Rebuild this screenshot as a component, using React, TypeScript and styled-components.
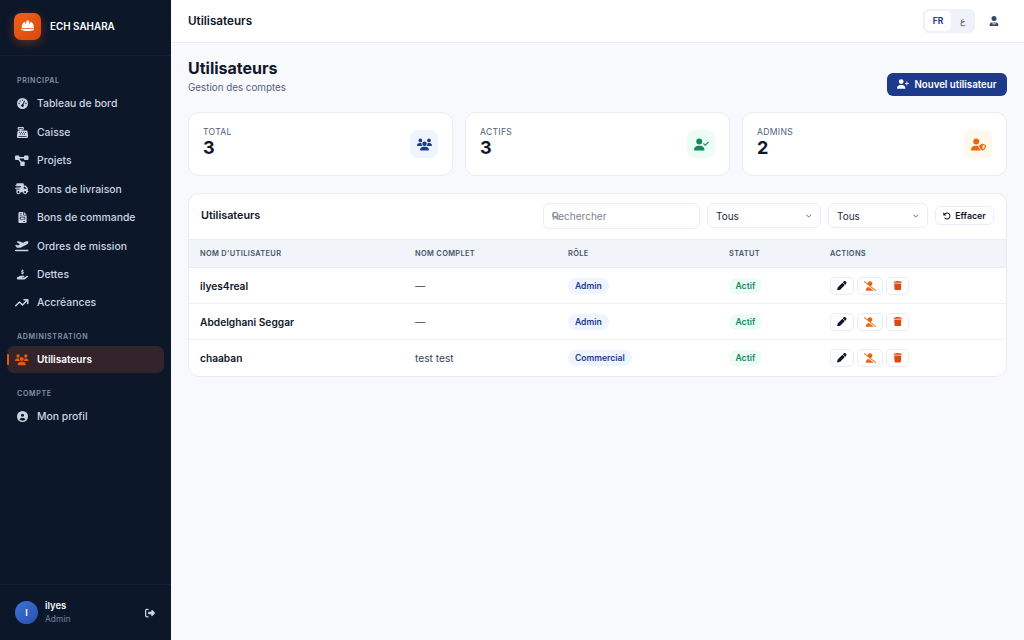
import React from "react";
import styled, { createGlobalStyle } from "styled-components";
import {
  FaArrowRotateLeft,
  FaArrowTrendUp,
  FaCashRegister,
  FaChevronDown,
  FaCircleUser,
  FaDiagramProject,
  FaFileInvoice,
  FaGaugeHigh,
  FaHandHoldingDollar,
  FaHelmetSafety,
  FaMagnifyingGlass,
  FaPen,
  FaPlaneDeparture,
  FaRightFromBracket,
  FaTrash,
  FaTruckFast,
  FaUserCheck,
  FaUserPlus,
  FaUserShield,
  FaUserSlash,
  FaUserTie,
  FaUsers,
} from "react-icons/fa6";

const Global = createGlobalStyle`
  html, body { margin: 0; padding: 0; height: 100%; }
  body {
    font-family: Inter, "Open Sans", "Liberation Sans", sans-serif;
    background: #f8f9fc;
    color: #0f172a;
  }
`;

const Shell = styled.div`
  display: flex;
  width: 1024px;
  height: 640px;
  overflow: hidden;
`;

const Sidebar = styled.aside`
  width: 171px;
  flex: none;
  background: #0d172a;
  display: flex;
  flex-direction: column;
`;

const Brand = styled.div`
  height: 56px;
  padding: 0 14px 3px;
  box-sizing: border-box;
  display: flex;
  align-items: center;
  gap: 9px;
  border-bottom: 1px solid #131e32;
  flex: none;
`;

const BrandMark = styled.div`
  width: 27px;
  height: 27px;
  border-radius: 7px;
  background: linear-gradient(135deg, #ee6218, #d9480f);
  box-shadow: 0 3px 10px rgba(234, 88, 12, 0.35);
  color: #fff;
  font-size: 13.5px;
  display: flex;
  align-items: center;
  justify-content: center;
`;

const BrandName = styled.div`
  color: #fff;
  font-size: 9.9px;
  font-weight: 600;
`;

const Nav = styled.nav`
  flex: 1;
  padding: 16.4px 7px 0;
  display: flex;
  flex-direction: column;
`;

const SectionLabel = styled.div<{ $gap?: number }>`
  font-size: 7.1px;
  font-weight: 600;
  letter-spacing: 0.65px;
  color: #8592ab;
  padding-left: 10px;
  height: 18px;
  line-height: 18px;
  margin-top: ${(p) => p.$gap ?? 0}px;
`;

const NavItem = styled.div<{ $active?: boolean }>`
  position: relative;
  height: 27px;
  margin-bottom: 1.45px;
  border-radius: 7px;
  display: flex;
  align-items: center;
  padding-left: 8px;
  gap: 8px;
  font-size: ${(p) => (p.$active ? 10 : 10.4)}px;
  font-weight: ${(p) => (p.$active ? 600 : 500)};
  color: ${(p) => (p.$active ? "#ffffff" : "#cbd5e1")};
  background: ${(p) => (p.$active ? "#33232a" : "transparent")};
  svg {
    color: ${(p) => (p.$active ? "#ea580c" : "#cbd5e1")};
  }
`;

const ActiveBar = styled.span`
  position: absolute;
  left: 0;
  top: 8px;
  width: 2px;
  height: 11px;
  border-radius: 2px;
  background: #ea580c;
`;

const NavIcon = styled.span<{ $wide?: boolean }>`
  width: 14px;
  font-size: ${(p) => (p.$wide ? 13.5 : 11)}px;
  display: flex;
  justify-content: center;
  flex: none;
`;

const SideFooter = styled.div`
  height: 56px;
  box-sizing: border-box;
  border-top: 1px solid #131e32;
  padding: 0 16px 0 15px;
  display: flex;
  align-items: center;
  gap: 7px;
  flex: none;
`;

const Avatar = styled.div`
  width: 23px;
  height: 23px;
  border-radius: 50%;
  background: linear-gradient(135deg, #3b74dc, #2a4fa8);
  color: #fff;
  font-size: 9px;
  font-weight: 600;
  display: flex;
  align-items: center;
  justify-content: center;
`;

const FooterText = styled.div`
  flex: 1;
  margin-top: -2px;
`;

const FooterName = styled.div`
  color: #f1f5f9;
  font-size: 9.5px;
  font-weight: 600;
  line-height: 14px;
`;

const FooterRole = styled.div`
  color: #74819a;
  font-size: 8.5px;
  line-height: 12px;
`;

const Logout = styled.span`
  color: #cbd5e1;
  font-size: 10px;
  display: flex;
`;

const Main = styled.div`
  flex: 1;
  min-width: 0;
  display: flex;
  flex-direction: column;
`;

const Topbar = styled.header`
  height: 43px;
  box-sizing: border-box;
  background: #fff;
  border-bottom: 1px solid #e9edf3;
  padding: 0 25px 0 17px;
  display: flex;
  align-items: center;
  justify-content: space-between;
`;

const TopTitle = styled.div`
  font-size: 11.7px;
  font-weight: 600;
  color: #0f172a;
`;

const TopRight = styled.div`
  display: flex;
  align-items: center;
  gap: 14px;
`;

const LangSwitch = styled.div`
  display: flex;
  padding: 1px;
  background: #eff2f8;
  border: 1px solid #eef1f7;
  border-radius: 6px;
`;

const LangButton = styled.div<{ $active?: boolean }>`
  width: ${(p) => (p.$active ? 26 : 22)}px;
  height: 20px;
  border-radius: 5px;
  background: ${(p) => (p.$active ? "#fff" : "transparent")};
  color: ${(p) => (p.$active ? "#1e3a8a" : "#475569")};
  font-size: 8.5px;
  font-weight: ${(p) => (p.$active ? 700 : 400)};
  display: flex;
  align-items: center;
  justify-content: center;
`;

const TopUser = styled.span`
  color: #334766;
  font-size: 10px;
  display: flex;
`;

const Content = styled.main`
  flex: 1;
  padding: 15px 17px;
  display: flex;
  flex-direction: column;
`;

const PageHead = styled.div`
  display: flex;
  justify-content: space-between;
  align-items: center;
  height: 38px;
  margin-bottom: 16px;
`;

const PageTitle = styled.h1`
  margin: 0;
  font-size: 16px;
  line-height: 18px;
  font-weight: 700;
  color: #0f172a;
`;

const PageSub = styled.div`
  font-size: 9.8px;
  line-height: 16px;
  color: #52617a;
  margin-top: 3px;
`;

const PrimaryButton = styled.button`
  height: 23px;
  width: 120px;
  margin-top: 14px;
  border: none;
  border-radius: 6px;
  background: #1e3a8a;
  color: #fff;
  font-family: inherit;
  font-size: 9.7px;
  font-weight: 600;
  display: flex;
  align-items: center;
  justify-content: center;
  gap: 5px;
  svg { font-size: 12px; }
`;

const Stats = styled.div`
  display: grid;
  grid-template-columns: repeat(3, 1fr);
  gap: 12px;
  margin-bottom: 17px;
`;

const StatCard = styled.div`
  height: 64px;
  box-sizing: border-box;
  background: #fff;
  border: 1px solid #e9edf3;
  border-radius: 11px;
  padding: 0 14px;
  display: flex;
  align-items: center;
  justify-content: space-between;
`;

const StatText = styled.div`
  margin-top: -4px;
`;

const StatLabel = styled.div`
  font-size: 8.6px;
  line-height: 11px;
  color: #52617a;
  letter-spacing: 0.3px;
`;

const StatValue = styled.div`
  font-size: 18px;
  line-height: 20px;
  font-weight: 700;
  color: #0f172a;
`;

const StatIcon = styled.div<{ $bg: string; $fg: string }>`
  width: 28px;
  height: 28px;
  border-radius: 8px;
  background: ${(p) => p.$bg};
  color: ${(p) => p.$fg};
  font-size: 15px;
  display: flex;
  align-items: center;
  justify-content: center;
`;

const TableCard = styled.section`
  background: #fff;
  border: 1px solid #e9edf3;
  border-radius: 11px;
  overflow: hidden;
`;

const Toolbar = styled.div`
  height: 45px;
  box-sizing: border-box;
  padding: 0 12px 2px;
  display: flex;
  align-items: center;
  gap: 7px;
`;

const ToolbarTitle = styled.div`
  flex: 1;
  font-size: 10.8px;
  font-weight: 600;
  color: #0f172a;
`;

const SearchBox = styled.div`
  position: relative;
  width: 157px;
  height: 26px;
  box-sizing: border-box;
  border: 1px solid #e9edf3;
  border-radius: 6px;
  display: flex;
  align-items: center;
  padding-left: 8px;
  font-size: 10px;
  color: #7b8494;
`;

const SearchGlyph = styled.span`
  position: absolute;
  left: 8px;
  top: 8px;
  font-size: 8px;
  color: #8e97a6;
  display: flex;
`;

const Select = styled.div<{ $w: number }>`
  width: ${(p) => p.$w}px;
  height: 25px;
  box-sizing: border-box;
  border: 1px solid #e9edf3;
  border-radius: 6px;
  padding: 0 9px 0 8px;
  display: flex;
  align-items: center;
  justify-content: space-between;
  font-size: 10px;
  color: #1e293b;
  svg { font-size: 5.5px; color: #475569; }
`;

const ClearButton = styled.div`
  width: 59px;
  height: 19px;
  box-sizing: border-box;
  border: 1px solid #e9edf3;
  border-radius: 6px;
  display: flex;
  align-items: center;
  justify-content: center;
  gap: 4px;
  font-size: 8.8px;
  font-weight: 600;
  color: #0f172a;
  svg { font-size: 8px; }
`;

const Table = styled.table`
  width: 100%;
  border-collapse: separate;
  border-spacing: 0;
  table-layout: fixed;
`;

const HeadCell = styled.th<{ $w?: number }>`
  ${(p) => (p.$w ? `width: ${p.$w}px;` : "")}
  height: 29px;
  box-sizing: border-box;
  padding: 0 0 0 11px;
  background: #f1f4f9;
  border-top: 1px solid #e9edf3;
  border-bottom: 1px solid #e9edf3;
  text-align: left;
  font-size: 7.4px;
  font-weight: 600;
  letter-spacing: 0.35px;
  color: #475569;
`;

const Cell = styled.td<{ $strong?: boolean }>`
  height: 36px;
  box-sizing: border-box;
  padding: 0 0 0 11px;
  border-bottom: 1px solid #eef1f6;
  font-size: 10.2px;
  font-weight: ${(p) => (p.$strong ? 600 : 400)};
  color: ${(p) => (p.$strong ? "#0f172a" : "#334155")};
  tr:last-child & { border-bottom: none; }
`;

const Pill = styled.span<{ $tone: "blue" | "green" }>`
  display: inline-flex;
  align-items: center;
  height: 16px;
  padding: 0 ${(p) => (p.$tone === "blue" ? 7 : 6.5)}px;
  border-radius: 8px;
  font-size: 8.6px;
  font-weight: 600;
  background: ${(p) => (p.$tone === "blue" ? "#eff5ff" : "#ecfdf5")};
  color: ${(p) => (p.$tone === "blue" ? "#1e3a8a" : "#15885f")};
`;

const Actions = styled.div`
  display: flex;
  gap: 3px;
`;

const ActionButton = styled.span<{ $w: number; $fg: string; $size: number }>`
  width: ${(p) => p.$w}px;
  height: 18px;
  box-sizing: border-box;
  border: 1px solid #e9edf3;
  border-radius: 5px;
  display: flex;
  align-items: center;
  justify-content: center;
  font-size: ${(p) => p.$size}px;
  color: ${(p) => p.$fg};
`;

const mainNav = [
  { label: "Tableau de bord", icon: <FaGaugeHigh /> },
  { label: "Caisse", icon: <FaCashRegister /> },
  { label: "Projets", icon: <FaDiagramProject />, wide: true },
  { label: "Bons de livraison", icon: <FaTruckFast />, wide: true },
  { label: "Bons de commande", icon: <FaFileInvoice /> },
  { label: "Ordres de mission", icon: <FaPlaneDeparture />, wide: true },
  { label: "Dettes", icon: <FaHandHoldingDollar /> },
  { label: "Accréances", icon: <FaArrowTrendUp />, wide: true },
];

const users = [
  { username: "ilyes4real", fullName: "—", role: "Admin" },
  { username: "Abdelghani Seggar", fullName: "—", role: "Admin" },
  { username: "chaaban", fullName: "test test", role: "Commercial" },
];

export default function App() {
  return (
    <Shell>
      <Global />
      <Sidebar>
        <Brand>
          <BrandMark>
            <FaHelmetSafety />
          </BrandMark>
          <BrandName>ECH SAHARA</BrandName>
        </Brand>
        <Nav>
          <SectionLabel>PRINCIPAL</SectionLabel>
          {mainNav.map((item) => (
            <NavItem key={item.label}>
              <NavIcon $wide={item.wide}>{item.icon}</NavIcon>
              {item.label}
            </NavItem>
          ))}
          <SectionLabel $gap={10}>ADMINISTRATION</SectionLabel>
          <NavItem $active>
            <ActiveBar />
            <NavIcon $wide>
              <FaUsers />
            </NavIcon>
            Utilisateurs
          </NavItem>
          <SectionLabel $gap={11}>COMPTE</SectionLabel>
          <NavItem>
            <NavIcon>
              <FaCircleUser />
            </NavIcon>
            Mon profil
          </NavItem>
        </Nav>
        <SideFooter>
          <Avatar>I</Avatar>
          <FooterText>
            <FooterName>ilyes</FooterName>
            <FooterRole>Admin</FooterRole>
          </FooterText>
          <Logout>
            <FaRightFromBracket />
          </Logout>
        </SideFooter>
      </Sidebar>
      <Main>
        <Topbar>
          <TopTitle>Utilisateurs</TopTitle>
          <TopRight>
            <LangSwitch>
              <LangButton $active>FR</LangButton>
              <LangButton>ع</LangButton>
            </LangSwitch>
            <TopUser>
              <FaUserTie />
            </TopUser>
          </TopRight>
        </Topbar>
        <Content>
          <PageHead>
            <div>
              <PageTitle>Utilisateurs</PageTitle>
              <PageSub>Gestion des comptes</PageSub>
            </div>
            <PrimaryButton>
              <FaUserPlus />
              Nouvel utilisateur
            </PrimaryButton>
          </PageHead>
          <Stats>
            <StatCard>
              <StatText>
                <StatLabel>TOTAL</StatLabel>
                <StatValue>3</StatValue>
              </StatText>
              <StatIcon $bg="#eff5ff" $fg="#1e3a8a">
                <FaUsers />
              </StatIcon>
            </StatCard>
            <StatCard>
              <StatText>
                <StatLabel>ACTIFS</StatLabel>
                <StatValue>3</StatValue>
              </StatText>
              <StatIcon $bg="#ecfdf5" $fg="#15885f">
                <FaUserCheck />
              </StatIcon>
            </StatCard>
            <StatCard>
              <StatText>
                <StatLabel>ADMINS</StatLabel>
                <StatValue>2</StatValue>
              </StatText>
              <StatIcon $bg="#fff8eb" $fg="#e8680f">
                <FaUserShield />
              </StatIcon>
            </StatCard>
          </Stats>
          <TableCard>
            <Toolbar>
              <ToolbarTitle>Utilisateurs</ToolbarTitle>
              <SearchBox>
                <SearchGlyph>
                  <FaMagnifyingGlass />
                </SearchGlyph>
                Rechercher
              </SearchBox>
              <Select $w={114}>
                Tous
                <FaChevronDown />
              </Select>
              <Select $w={100}>
                Tous
                <FaChevronDown />
              </Select>
              <ClearButton>
                <FaArrowRotateLeft />
                Effacer
              </ClearButton>
            </Toolbar>
            <Table>
              <thead>
                <tr>
                  <HeadCell $w={215}>NOM D'UTILISATEUR</HeadCell>
                  <HeadCell $w={153}>NOM COMPLET</HeadCell>
                  <HeadCell $w={161}>RÔLE</HeadCell>
                  <HeadCell $w={101}>STATUT</HeadCell>
                  <HeadCell>ACTIONS</HeadCell>
                </tr>
              </thead>
              <tbody>
                {users.map((user) => (
                  <tr key={user.username}>
                    <Cell $strong>{user.username}</Cell>
                    <Cell>{user.fullName}</Cell>
                    <Cell>
                      <Pill $tone="blue">{user.role}</Pill>
                    </Cell>
                    <Cell>
                      <Pill $tone="green">Actif</Pill>
                    </Cell>
                    <Cell>
                      <Actions>
                        <ActionButton $w={24} $fg="#0f172a" $size={9.5}>
                          <FaPen />
                        </ActionButton>
                        <ActionButton $w={26} $fg="#e8680f" $size={12}>
                          <FaUserSlash />
                        </ActionButton>
                        <ActionButton $w={23} $fg="#dc4a14" $size={9.5}>
                          <FaTrash />
                        </ActionButton>
                      </Actions>
                    </Cell>
                  </tr>
                ))}
              </tbody>
            </Table>
          </TableCard>
        </Content>
      </Main>
    </Shell>
  );
}
